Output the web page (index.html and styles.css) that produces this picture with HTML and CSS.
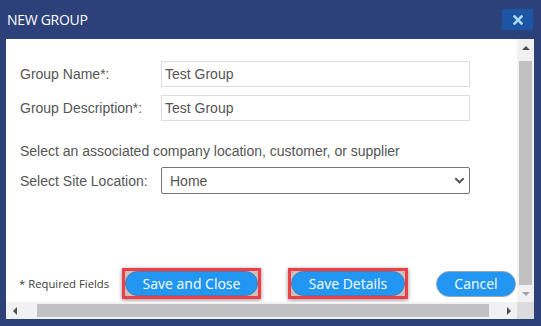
FILE: index.html
```html
<!DOCTYPE html>
<html lang="en">
<head>
    <meta charset="UTF-8">
    <meta name="viewport" content="width=device-width, initial-scale=1.0">
    <title>New Group</title>
    <link rel="stylesheet" href="styles.css">
</head>
<body>

    <div class="dialog">
        <div class="dialog-header">
            <span class="dialog-title">NEW GROUP</span>
            <button class="close-btn" aria-label="Close">
                <svg width="10" height="10" viewBox="0 0 10 10">
                    <path d="M1.5 1.5 L8.5 8.5 M8.5 1.5 L1.5 8.5" stroke="#a9d9f7" stroke-width="2.6" stroke-linecap="square"/>
                </svg>
            </button>
        </div>

        <div class="dialog-body">
            <div class="content">
                <div class="field">
                    <label class="field-label">Group Name*:</label>
                    <div class="text-input">Test Group</div>
                </div>
                <div class="field">
                    <label class="field-label">Group Description*:</label>
                    <div class="text-input">Test Group</div>
                </div>

                <p class="hint">Select an associated company location, customer, or supplier</p>

                <div class="field">
                    <label class="field-label">Select Site Location:</label>
                    <div class="select-box">
                        <span>Home</span>
                        <svg width="11" height="7" viewBox="0 0 11 7">
                            <path d="M1.3 1.3 L5.5 5.3 L9.7 1.3" fill="none" stroke="#555" stroke-width="2"/>
                        </svg>
                    </div>
                </div>

                <div class="footer">
                    <span class="required">* Required Fields</span>
                    <div class="highlight save-close">
                        <button class="pill">Save and Close</button>
                    </div>
                    <div class="highlight save-details">
                        <button class="pill">Save Details</button>
                    </div>
                    <button class="pill cancel">Cancel</button>
                </div>
            </div>

            <!-- scrollbars -->
            <div class="vscroll">
                <div class="arrow"><span class="tri up"></span></div>
                <div class="vthumb"></div>
                <div class="arrow"><span class="tri down off"></span></div>
            </div>
            <div class="hscroll">
                <div class="arrow"><span class="tri left"></span></div>
                <div class="hthumb"></div>
                <div class="arrow"><span class="tri right"></span></div>
            </div>
            <div class="corner"></div>
        </div>
    </div>

</body>
</html>
```

FILE: styles.css
```css
body {
    margin: 0;
    background-color: #2c4079;
    font-family: "Liberation Sans", Arial, sans-serif;
}

.dialog {
    width: 541px;
    height: 326px;
    box-sizing: border-box;
    padding: 0 7px 7px 6px;
    display: flex;
    flex-direction: column;
}

.dialog-header {
    height: 39px;
    flex: none;
    display: flex;
    align-items: center;
    justify-content: space-between;
}

.dialog-title {
    padding-left: 1px;
    color: #ffffff;
    font-family: "Open Sans", sans-serif;
    font-size: 14px;
    letter-spacing: -0.3px;
}

.close-btn {
    width: 31px;
    height: 21px;
    margin-right: 1px;
    padding: 0;
    border: none;
    background-color: #1b55a4;
    display: flex;
    justify-content: center;
    align-items: center;
    cursor: pointer;
}

.dialog-body {
    flex: 1;
    display: grid;
    grid-template-columns: 1fr 17px;
    grid-template-rows: 1fr 17px;
    background-color: #ffffff;
    min-height: 0;
}

.content {
    padding: 22px 0 3px 14px;
    display: flex;
    flex-direction: column;
    color: #555555;
    font-size: 14px;
    overflow: hidden;
}

.field {
    display: flex;
    align-items: center;
    margin-bottom: 8px;
}

.field-label {
    width: 141px;
    flex: none;
}

.text-input {
    width: 309px;
    height: 26px;
    box-sizing: border-box;
    border: 1px solid #dcdcdc;
    padding: 0 3px;
    display: flex;
    align-items: center;
}

.hint {
    margin: 12px 0 6px;
    line-height: 20px;
}

.select-box {
    width: 309px;
    height: 27px;
    box-sizing: border-box;
    border: 1px solid #767676;
    border-radius: 2px;
    padding: 0 4px 0 8px;
    display: flex;
    align-items: center;
    justify-content: space-between;
}

.footer {
    margin-top: auto;
    margin-left: -1px;
    display: flex;
    align-items: center;
    height: 31px;
}

.required {
    width: 103px;
    flex: none;
    font-family: "Open Sans", sans-serif;
    font-size: 11.3px;
    color: #404040;
}

.highlight {
    flex: none;
    height: 31px;
    box-sizing: border-box;
    border: 3px solid #ee3f48;
    background-color: #c9bfbc;
    box-shadow: 0 1px 4px rgba(0, 0, 0, 0.45);
    display: flex;
}

.save-close {
    width: 139px;
}

.save-details {
    width: 120px;
    margin-left: 27px;
}

.pill {
    height: 25px;
    width: 100%;
    box-sizing: border-box;
    border: 1px solid #4d7cae;
    border-radius: 13px;
    background-color: #2196f3;
    color: #ffffff;
    font-family: "Open Sans", sans-serif;
    font-size: 14px;
    padding: 0;
    cursor: pointer;
}

.pill.cancel {
    flex: none;
    width: 80px;
    height: 26px;
    margin-left: 28px;
    border-color: #9aa7b3;
}

/* fake scrollbars */
.vscroll {
    background-color: #f1f1f1;
    display: flex;
    flex-direction: column;
}

.hscroll {
    background-color: #f1f1f1;
    display: flex;
}

.arrow {
    width: 17px;
    height: 17px;
    flex: none;
    display: flex;
    justify-content: center;
    align-items: center;
}

.vthumb {
    flex: 1;
    margin: 5px 2px 0;
    background-color: #c1c1c1;
}

.hthumb {
    flex: 1;
    margin: 2px 11px 2px 14px;
    background-color: #c1c1c1;
}

.corner {
    background-color: #dcdcdc;
}

.tri {
    width: 0;
    height: 0;
    border: 4px solid transparent;
}

.tri.up {
    border-bottom-color: #505050;
    border-top-width: 0;
}

.tri.down {
    border-top-color: #505050;
    border-bottom-width: 0;
}

.tri.left {
    border-right-color: #505050;
    border-left-width: 0;
}

.tri.right {
    border-left-color: #505050;
    border-right-width: 0;
}

.tri.off {
    border-top-color: #a3a3a3;
}
```
